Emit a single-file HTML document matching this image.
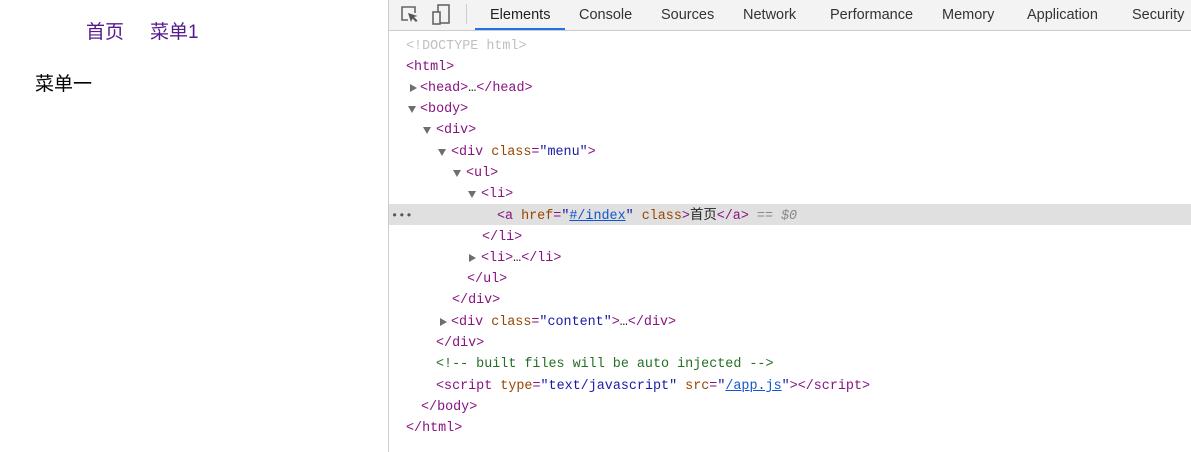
<!DOCTYPE html>
<html><head><meta charset="utf-8"><style>
*{margin:0;padding:0;box-sizing:border-box}
body{width:1191px;height:452px;overflow:hidden;background:#fff;position:relative;font-family:"Liberation Sans","Noto Sans CJK SC",sans-serif}
.nav{position:absolute;top:21px;font-size:19px;color:#551a8b;line-height:24px}
.dt{position:absolute;left:388px;top:0;width:803px;height:452px;border-left:1px solid #ccc;background:#fff}
.tb{position:absolute;left:0;top:0;width:803px;height:31px;background:#f3f3f3;border-bottom:1px solid #ccc}
.tab{position:absolute;top:7px;font-size:14.5px;color:#333;line-height:16px}
.ul{position:absolute;left:86px;top:28px;width:90px;height:2px;background:#1a73e8}
.l{position:absolute;font-family:"Liberation Mono","Noto Sans CJK SC",monospace;font-size:13.4px;line-height:16px;color:#881280;white-space:pre}
.a{color:#994500}.v{color:#1a1aa6}.k{color:#1155cc;text-decoration:underline}.c{color:#236e25}.d{color:#c0c0c0}.t{color:#222}.g{color:#888;font-style:italic}.p{color:#a894a6}
.tri{position:absolute;width:0;height:0}
.r{border-top:4px solid transparent;border-bottom:4px solid transparent;border-left:7px solid #6e6e6e}
.dn{border-left:4px solid transparent;border-right:4px solid transparent;border-top:7px solid #6e6e6e}
.sel{position:absolute;left:0;top:204px;width:803px;height:21px;background:#e0e0e0}
.code{position:absolute;left:0;top:2px;width:803px;height:450px}
</style></head><body>
<div class="nav" style="left:86px">首页</div>
<div class="nav" style="left:150px">菜单1</div>
<div style="position:absolute;left:35px;top:73px;font-size:19px;line-height:24px;color:#000">菜单一</div>
<div class="dt">
<div class="tb">
<svg style="position:absolute;left:11px;top:5px" width="20" height="20" viewBox="0 0 20 20"><path d="M8 15H2V2h13v6" fill="none" stroke="#666" stroke-width="1.6"/><path d="M8 8l3 9 1.5-3.5 3.5 3.5 1.5-1.5-3.5-3.5L17.5 11z" fill="#555"/></svg>
<svg style="position:absolute;left:43px;top:4px" width="20" height="22" viewBox="0 0 20 22"><rect x="6" y="1" width="11" height="18" fill="none" stroke="#666" stroke-width="1.6"/><rect x="1" y="8" width="7" height="12" fill="#f3f3f3" stroke="#666" stroke-width="1.6"/></svg>
<div style="position:absolute;left:77px;top:4px;width:1px;height:20px;background:#ccc"></div>
<div class="tab" style="left:101px;color:#222">Elements</div>
<div class="ul"></div>
<div class="tab" style="left:190px">Console</div>
<div class="tab" style="left:272px">Sources</div>
<div class="tab" style="left:354px">Network</div>
<div class="tab" style="left:441px">Performance</div>
<div class="tab" style="left:553px">Memory</div>
<div class="tab" style="left:638px">Application</div>
<div class="tab" style="left:743px">Security</div>
</div>
<div class="sel"></div>
<div class="code">
<div class="l" style="left:2px;top:206px;color:#555;font-size:12px">•••</div>
<div class="l d" style="left:17px;top:37px">&lt;!DOCTYPE html&gt;</div>
<div class="l" style="left:17px;top:58px">&lt;html&gt;</div>
<div class="tri r" style="left:21px;top:82px"></div>
<div class="l" style="left:31px;top:79px">&lt;head&gt;<span class="t">…</span>&lt;/head&gt;</div>
<div class="tri dn" style="left:19px;top:104px"></div>
<div class="l" style="left:31px;top:100px">&lt;body&gt;</div>
<div class="tri dn" style="left:34px;top:125px"></div>
<div class="l" style="left:47px;top:121px">&lt;div&gt;</div>
<div class="tri dn" style="left:49px;top:147px"></div>
<div class="l" style="left:62px;top:143px">&lt;div <span class="a">class</span>=<span class="v">"menu"</span>&gt;</div>
<div class="tri dn" style="left:64px;top:168px"></div>
<div class="l" style="left:77px;top:164px">&lt;ul&gt;</div>
<div class="tri dn" style="left:79px;top:189px"></div>
<div class="l" style="left:92px;top:185px">&lt;li&gt;</div>
<div class="l" style="left:108px;top:207px">&lt;a <span class="a">href</span>=<span class="v">"<span class="k">#/index</span>"</span> <span class="a">class</span>&gt;<span class="t">首页</span>&lt;/a&gt; <span class="g">== $0</span></div>
<div class="l" style="left:93px;top:228px">&lt;/li&gt;</div>
<div class="tri r" style="left:80px;top:252px"></div>
<div class="l" style="left:92px;top:249px">&lt;li&gt;<span class="t">…</span>&lt;/li&gt;</div>
<div class="l" style="left:78px;top:270px">&lt;/ul&gt;</div>
<div class="l" style="left:63px;top:291px">&lt;/div&gt;</div>
<div class="tri r" style="left:51px;top:316px"></div>
<div class="l" style="left:62px;top:313px">&lt;div <span class="a">class</span>=<span class="v">"content"</span>&gt;<span class="t">…</span>&lt;/div&gt;</div>
<div class="l" style="left:47px;top:334px">&lt;/div&gt;</div>
<div class="l c" style="left:47px;top:355px">&lt;!-- built files will be auto injected --&gt;</div>
<div class="l" style="left:47px;top:377px">&lt;script <span class="a">type</span>=<span class="v">"text/javascript"</span> <span class="a">src</span>=<span class="v">"<span class="k">/app.js</span>"</span>&gt;&lt;/script&gt;</div>
<div class="l" style="left:32px;top:398px">&lt;/body&gt;</div>
<div class="l" style="left:17px;top:419px">&lt;/html&gt;</div>
</div>
</div>
</body></html>
